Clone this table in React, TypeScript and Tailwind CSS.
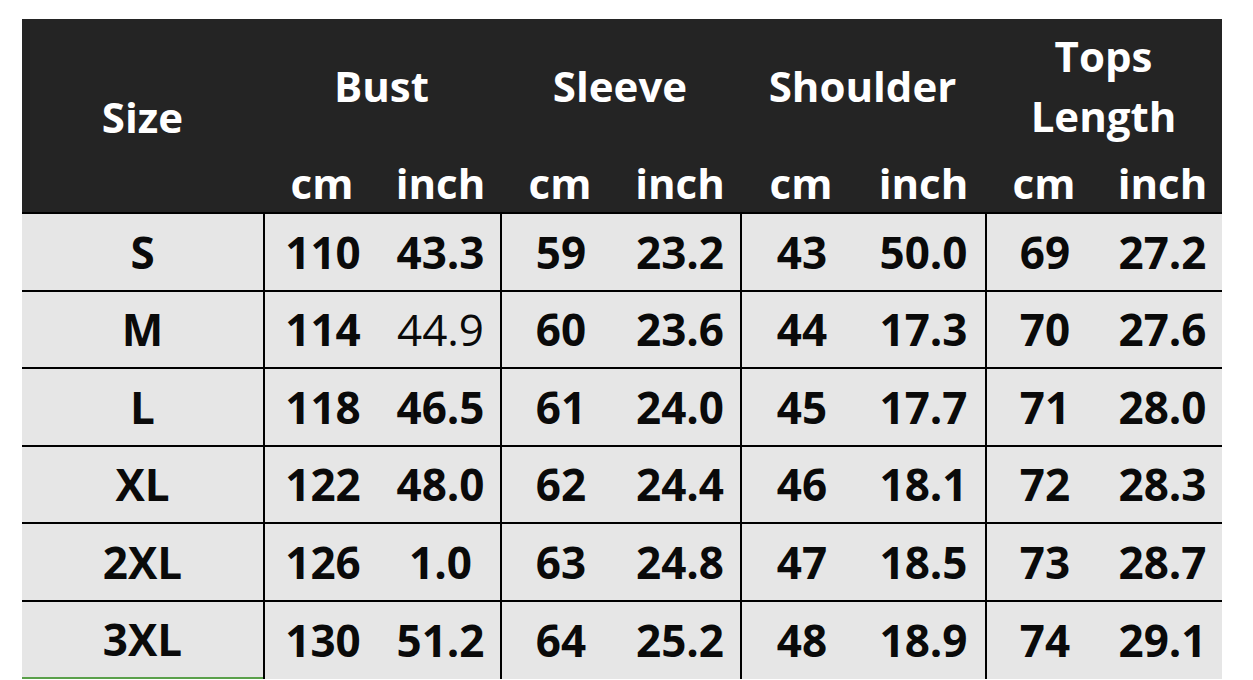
import React from "react";

const rows: { size: string; vals: string[]; light?: number[] }[] = [
  { size: "S", vals: ["110", "43.3", "59", "23.2", "43", "50.0", "69", "27.2"] },
  { size: "M", vals: ["114", "44.9", "60", "23.6", "44", "17.3", "70", "27.6"], light: [1] },
  { size: "L", vals: ["118", "46.5", "61", "24.0", "45", "17.7", "71", "28.0"] },
  { size: "XL", vals: ["122", "48.0", "62", "24.4", "46", "18.1", "72", "28.3"] },
  { size: "2XL", vals: ["126", "1.0", "63", "24.8", "47", "18.5", "73", "28.7"] },
  { size: "3XL", vals: ["130", "51.2", "64", "25.2", "48", "18.9", "74", "29.1"] },
];

const cols = "grid grid-cols-[241px_118px_119px_120px_120px_122px_123px_118px_119px]";

export default function App() {
  return (
    <div className="w-[1253px] h-[680px] bg-white overflow-hidden pt-[19px] pl-[22px]" style={{ fontFamily: '"Open Sans", "Noto Sans", sans-serif' }}>
      <div className="w-[1200px]">
        {/* header */}
        <div className={`${cols} grid-rows-[131px_62px] bg-[#242424] text-white font-bold text-[42px] leading-none border-b-2 border-black`}>
          <div className="row-span-2 flex items-center justify-center pt-[2px]">Size</div>
          <div className="col-span-2 flex items-center justify-center pt-[2px]">Bust</div>
          <div className="col-span-2 flex items-center justify-center pt-[2px]">Sleeve</div>
          <div className="col-span-2 flex items-center justify-center pt-[2px]">Shoulder</div>
          <div className="col-span-2 flex flex-col items-center justify-center leading-[60px] pt-[2px]">
            <span>Tops</span>
            <span>Length</span>
          </div>
          {["cm", "inch", "cm", "inch", "cm", "inch", "cm", "inch"].map((t, i) => (
            <div key={i} className="flex items-center justify-center pt-[4px]">{t}</div>
          ))}
        </div>
        {/* body */}
        {rows.map((r, ri) => (
          <div
            key={r.size}
            className={`${cols} bg-[#e6e6e6] text-[#0a0a0a] text-[44px] leading-none ${ri < rows.length - 1 ? "h-[77.5px] border-b-2 border-black" : "h-[77px] border-b-0"}`}
          >
            <div className={`flex items-center justify-center font-bold ${ri === rows.length - 1 ? "border-b-2 border-[#5aa04a]" : ""}`}>{r.size}</div>
            {r.vals.map((v, i) => (
              <div
                key={i}
                className={`flex items-center justify-center ${r.light?.includes(i) ? "font-normal" : "font-bold"} ${i % 2 === 0 ? "border-l-2 border-black" : ""}`}
              >
                {v}
              </div>
            ))}
          </div>
        ))}
      </div>
    </div>
  );
}
